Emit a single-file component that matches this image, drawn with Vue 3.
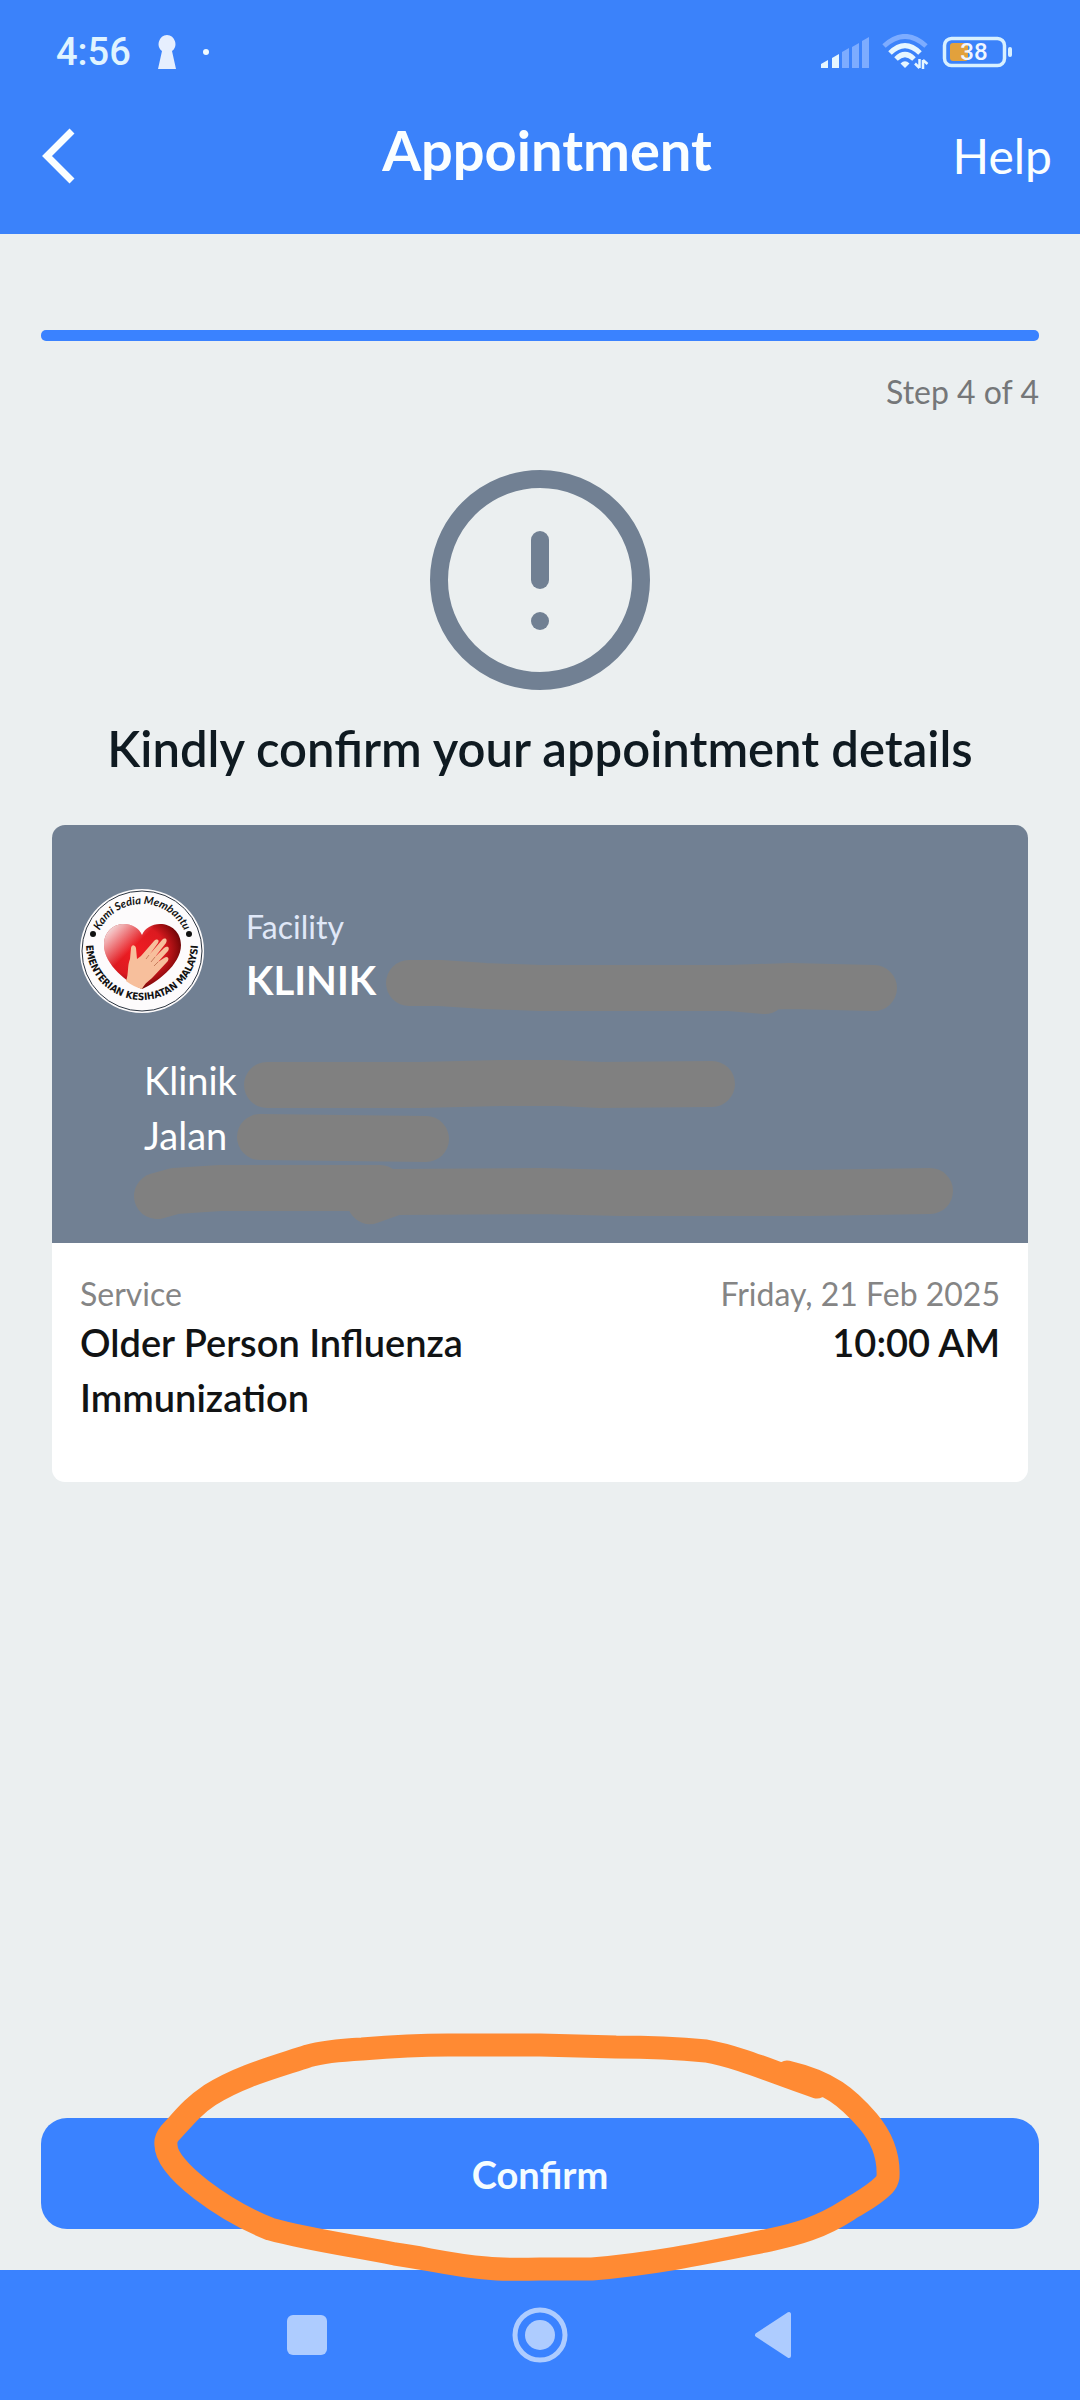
<script setup>
import { ref } from 'vue'

const time = ref('4:56')
const battery = ref(38)
const step = ref(4)
const totalSteps = 4
const signalBars = [
  { x: 0, h: 8, on: true },
  { x: 11, h: 14, on: true },
  { x: 21, h: 20, on: false },
  { x: 31, h: 25, on: false },
  { x: 41, h: 31, on: false },
]
const appointment = {
  facility: 'KLINIK',
  address: ['Klinik', 'Jalan'],
  service: 'Older Person Influenza Immunization',
  date: 'Friday, 21 Feb 2025',
  time: '10:00 AM',
}
</script>

<template>
  <div class="screen">
    <header class="header">
      <div class="status">
        <span class="clock">{{ time }}</span>
        <svg class="keyhole" width="18" height="34" viewBox="0 0 18 34" aria-hidden="true">
          <path d="M9 0a9 9 0 0 1 5 16L18 34H0L4 16A9 9 0 0 1 9 0z" fill="#e6effe" />
        </svg>
        <span class="dot"></span>
        <span class="spacer"></span>
        <svg width="48" height="31" viewBox="0 0 48 31" aria-hidden="true">
          <path
            v-for="bar in signalBars"
            :key="bar.x"
            :d="`M${bar.x} 31V${31 - bar.h + 4}l7 -4V31z`"
            :fill="bar.on ? '#e6f6ff' : '#7dacff'"
            :stroke="bar.on ? '#e6f6ff' : '#7dacff'"
            stroke-width="0"
          />
        </svg>
        <svg class="wifi" width="48" height="36" viewBox="0 0 48 36" fill="none" aria-hidden="true">
          <path d="M2 12Q23 -7 44 12" stroke="#7dacff" stroke-width="5" />
          <path d="M8 19Q23 4 38 19" stroke="#e6f6ff" stroke-width="5" />
          <path d="M14 25Q23 16 32 25" stroke="#e6f6ff" stroke-width="5" />
          <path d="M18.500 29.500Q23 25 27.500 29.500L23 34z" fill="#e6f6ff" />
          <path d="M37.500 25V34M37.500 34L33 29.500M41 35V26M41 26L45.500 30" stroke="#e6f6ff" stroke-width="2.500" />
        </svg>
        <svg class="battery" width="70" height="32" viewBox="0 0 70 32" aria-hidden="true">
          <rect x="2.500" y="2.500" width="60" height="27" rx="7" fill="none" stroke="#d8f0ff" stroke-width="3.500" />
          <rect x="8" y="7" width="18" height="18" rx="3" fill="#e2a13c" />
          <rect x="66" y="11" width="4" height="10" rx="2" fill="#d8f0ff" />
          <text x="32" y="24" text-anchor="middle" class="battery-text">{{ battery }}</text>
        </svg>
      </div>
      <div class="bar">
        <button class="back" type="button" aria-label="Back">
          <svg width="34" height="56" viewBox="0 0 34 56" fill="none" aria-hidden="true">
            <path d="M30 3L5 28L30 53" stroke="#fafeff" stroke-width="7" />
          </svg>
        </button>
        <h1 class="title">Appointment</h1>
        <a class="help" href="#">Help</a>
      </div>
    </header>

    <main class="main">
      <div class="progress" role="progressbar" :aria-valuenow="step" :aria-valuemax="totalSteps">
        <div class="progress-fill" :style="{ width: (step / totalSteps) * 100 + '%' }"></div>
      </div>
      <p class="step">Step {{ step }} of {{ totalSteps }}</p>

      <svg class="alert" width="220" height="220" viewBox="0 0 220 220" aria-hidden="true">
        <circle cx="110" cy="110" r="101" fill="none" stroke="#718093" stroke-width="18" />
        <path d="M110 70V110" stroke="#718093" stroke-width="18" stroke-linecap="round" />
        <circle cx="110" cy="151" r="9" fill="#718093" />
      </svg>
      <h2 class="heading">Kindly confirm your appointment details</h2>

      <section class="card">
        <div class="card-head">
          <div class="facility">
            <svg class="logo" width="124" height="124" viewBox="0 0 124 124" role="img" aria-label="Kementerian Kesihatan Malaysia">
              <defs>
                <radialGradient id="heart" cx="0.4" cy="0.4" r="0.7">
                  <stop offset="0" stop-color="#f01c22" />
                  <stop offset="0.550" stop-color="#dc1a20" />
                  <stop offset="0.800" stop-color="#8c0a0c" />
                  <stop offset="1" stop-color="#3a0000" />
                </radialGradient>
                <linearGradient id="shine" x1="0" y1="0.100" x2="0.350" y2="0.400">
                  <stop offset="0" stop-color="#ffffff" stop-opacity="0.900" />
                  <stop offset="1" stop-color="#ffffff" stop-opacity="0" />
                </linearGradient>
                <path id="arc-top" d="M15 62A47 47 0 0 1 109 62" />
                <path id="arc-bottom" d="M6 55A56 56 0 1 0 118 55" />
              </defs>
              <circle cx="62" cy="62" r="62" fill="#fdfbfc" />
              <circle cx="62" cy="62" r="60" fill="none" stroke="#2b3440" stroke-width="1" />
              <text class="logo-top"><textPath href="#arc-top" startOffset="50%" text-anchor="middle">Kami Sedia Membantu</textPath></text>
              <text class="logo-bottom"><textPath href="#arc-bottom" startOffset="50%" text-anchor="middle">KEMENTERIAN KESIHATAN MALAYSIA</textPath></text>
              <circle cx="13" cy="45" r="3" fill="#111" />
              <circle cx="109" cy="45" r="3" fill="#111" />
              <path id="heart-shape" d="M62 100C48 94 24 76 24 56C24 42 34 35 44 35C52 35 59 39 62 46C65 39 72 35 80 35C91 35 101 43 101 56C101 76 76 94 62 100z" fill="url(#heart)" />
              <path d="M62 100C48 94 24 76 24 56C24 42 34 35 44 35C52 35 59 39 62 46C65 39 72 35 80 35C91 35 101 43 101 56C101 76 76 94 62 100z" fill="url(#shine)" />
              <path d="M46 92C49 84 47 77 50 70L51 59C52 55 55 56 56 59L57 70L61 67L74 52C77 49 80 51 78 54L70 65L82 51C85 48 88 50 86 54L75 68L84 59C88 56 90 59 88 62L78 73L84 69C88 66 90 70 87 73L73 88C69 92 65 94 62 100Q54 98 46 92z" fill="#f7bf9c" />
              <path d="M69 66L66 70M75 68L71 73M78 73L74 77" stroke="#c77d5c" stroke-width="1" />
            </svg>
            <div class="facility-text">
              <p class="label light">Facility</p>
              <p class="facility-name">{{ appointment.facility }}</p>
            </div>
          </div>
          <address class="address">
            <div v-for="line in appointment.address" :key="line">{{ line }}</div>
          </address>
          <svg class="redaction" width="976" height="418" viewBox="52 825 976 418" aria-hidden="true">
            <path d="M409 983H440L485 986L540 988H730L765 991M730 988L790 986L874 988" />
            <path d="M267 1085H420L500 1083H560L600 1085L712 1084" />
            <path d="M260 1137L426 1139" />
            <path d="M157 1196L175 1191L220 1188H380L370 1201L395 1192L540 1191L620 1193H810L930 1191" />
          </svg>
        </div>
        <div class="card-body">
          <div class="service">
            <p class="label">Service</p>
            <p class="value">{{ appointment.service }}</p>
          </div>
          <div class="when">
            <p class="label">{{ appointment.date }}</p>
            <p class="value">{{ appointment.time }}</p>
          </div>
        </div>
      </section>

      <div class="actions">
        <button class="confirm" type="button">Confirm</button>
        <svg class="marker" width="750" height="256" viewBox="150 2030 750 256" aria-hidden="true">
          <path d="M787 2072C830 2082 848 2098 868 2121C884 2140 889 2158 888 2177Q887 2182 884 2185C872 2197 862 2201 848 2210C820 2228 797 2234 770 2240C710 2252 660 2263 592 2269H540Q505 2270 486 2268C450 2265 425 2258 395 2254C350 2245 310 2240 270 2229C225 2211 166 2170 166 2145Q165 2139 170 2133C184 2118 192 2107 210 2095C240 2076 275 2067 308 2056Q325 2051 362 2049Q410 2045 448 2045H540L616 2047Q665 2047 706 2051C740 2057 775 2073 817 2087" />
        </svg>
      </div>
    </main>

    <nav class="nav">
      <button type="button" aria-label="Recent apps">
        <svg width="56" height="56" viewBox="0 0 56 56" aria-hidden="true"><rect x="8" y="8" width="40" height="40" rx="6" fill="#aeccff" /></svg>
      </button>
      <button type="button" aria-label="Home">
        <svg width="56" height="56" viewBox="0 0 56 56" aria-hidden="true">
          <circle cx="28" cy="28" r="25" fill="none" stroke="#aeccff" stroke-width="5" />
          <circle cx="28" cy="28" r="15" fill="#aeccff" />
        </svg>
      </button>
      <button type="button" aria-label="Back">
        <svg width="56" height="56" viewBox="0 0 56 56" aria-hidden="true">
          <path d="M12 28L44 7V49z" fill="#aeccff" stroke="#aeccff" stroke-width="4" stroke-linejoin="round" />
        </svg>
      </button>
    </nav>
  </div>
</template>

<style>
body {
  background: #ebeff0;
}
</style>

<style scoped>
.screen {
  display: flex;
  flex-direction: column;
  min-height: 100vh;
  background: #ebeff0;
  font-family: Lato, "Open Sans", sans-serif;
}
.screen * {
  box-sizing: border-box;
}
h1,
h2,
p {
  margin: 0;
}
svg {
  display: block;
}
button {
  padding: 0;
  border: 0;
  background: none;
  font-family: inherit;
}
.header {
  background: #3b82fa;
  padding-bottom: 22px;
  color: #fafeff;
}
.status {
  display: flex;
  align-items: center;
  height: 100px;
  padding: 4px 68px 0 56px;
}
.clock {
  font: 500 38px/40px Roboto, sans-serif;
  color: #e0f4ff;
}
.keyhole {
  margin-left: 27px;
}
.dot {
  width: 6px;
  height: 6px;
  margin-left: 27px;
  border-radius: 50%;
  background: #f0fbff;
}
.spacer {
  flex: 1;
}
.wifi {
  margin-left: 13px;
}
.battery {
  margin-left: 12px;
}
.battery-text {
  font: 500 24px Roboto, sans-serif;
  fill: #f0f6ff;
}
.bar {
  display: grid;
  grid-template-columns: 1fr auto 1fr;
  align-items: center;
  height: 112px;
  padding: 0 28px 0 42px;
}
.title {
  padding: 0 0 12px;
  font-size: 56px;
  line-height: 68px;
  font-weight: 700;
}
.help {
  justify-self: end;
  color: inherit;
  text-decoration: none;
  font-size: 48px;
  line-height: 60px;
}
.back {
  justify-self: start;
}
.main {
  flex: 1;
  display: flex;
  flex-direction: column;
  padding: 96px 41px 41px;
}
.progress {
  height: 11px;
}
.progress-fill {
  height: 100%;
  border-radius: 5px;
  background: #3a82ff;
}
.step {
  margin-top: 31px;
  text-align: right;
  font-size: 32px;
  line-height: 40px;
  color: #757779;
}
.alert {
  align-self: center;
  margin-top: 58px;
}
.heading {
  margin-top: 28px;
  text-align: center;
  font-size: 49px;
  line-height: 60px;
  font-weight: 600;
  color: #0f1a21;
}
.card {
  margin: 47px 11px 0;
  border-radius: 13px;
  overflow: hidden;
  background: #fff;
}
.card-head {
  position: relative;
  padding: 64px 28px 25px;
  background: #718093;
  color: #fff;
}
.facility {
  display: flex;
  align-items: center;
  gap: 42px;
}
.facility-text {
  padding-top: 12px;
}
.label {
  font-size: 32px;
  line-height: 42px;
  color: #858585;
}
.label.light {
  line-height: 46px;
  color: #e0e8f8;
}
.facility-name {
  font-size: 40px;
  line-height: 60px;
  font-weight: 700;
}
.address {
  min-height: 165px;
  margin-top: 40px;
  padding-left: 64px;
  font-size: 38px;
  line-height: 55px;
  font-style: normal;
}
.redaction {
  position: absolute;
  top: 0;
  left: 0;
  fill: none;
  stroke: #808080;
  stroke-width: 46px;
  stroke-linecap: round;
  stroke-linejoin: round;
}
.logo-top {
  font: italic 700 11px Lato, sans-serif;
  fill: #111;
}
.logo-bottom {
  font: 700 10px "Liberation Sans Narrow", "DejaVu Sans Condensed", sans-serif;
  fill: #111;
}
.card-body {
  display: flex;
  justify-content: space-between;
  padding: 30px 28px 57px;
}
.service {
  width: 50%;
}
.when {
  text-align: right;
}
.value {
  font-size: 38px;
  line-height: 55px;
  font-weight: 600;
  color: #111314;
}
.actions {
  position: relative;
  margin-top: auto;
}
.confirm {
  display: block;
  width: 100%;
  height: 111px;
  border-radius: 26px;
  background: #3a82ff;
  color: #f4fcff;
  font-size: 38px;
  line-height: 48px;
  font-weight: 700;
}
.marker {
  position: absolute;
  z-index: 1;
  top: -88px;
  left: 50%;
  margin-left: -390px;
  pointer-events: none;
  fill: none;
  stroke: #ff8a33;
  stroke-width: 23px;
  stroke-linecap: round;
  stroke-linejoin: round;
}
.nav {
  display: flex;
  justify-content: center;
  align-items: center;
  gap: 177px;
  height: 130px;
  background: #3a82ff;
}
</style>
